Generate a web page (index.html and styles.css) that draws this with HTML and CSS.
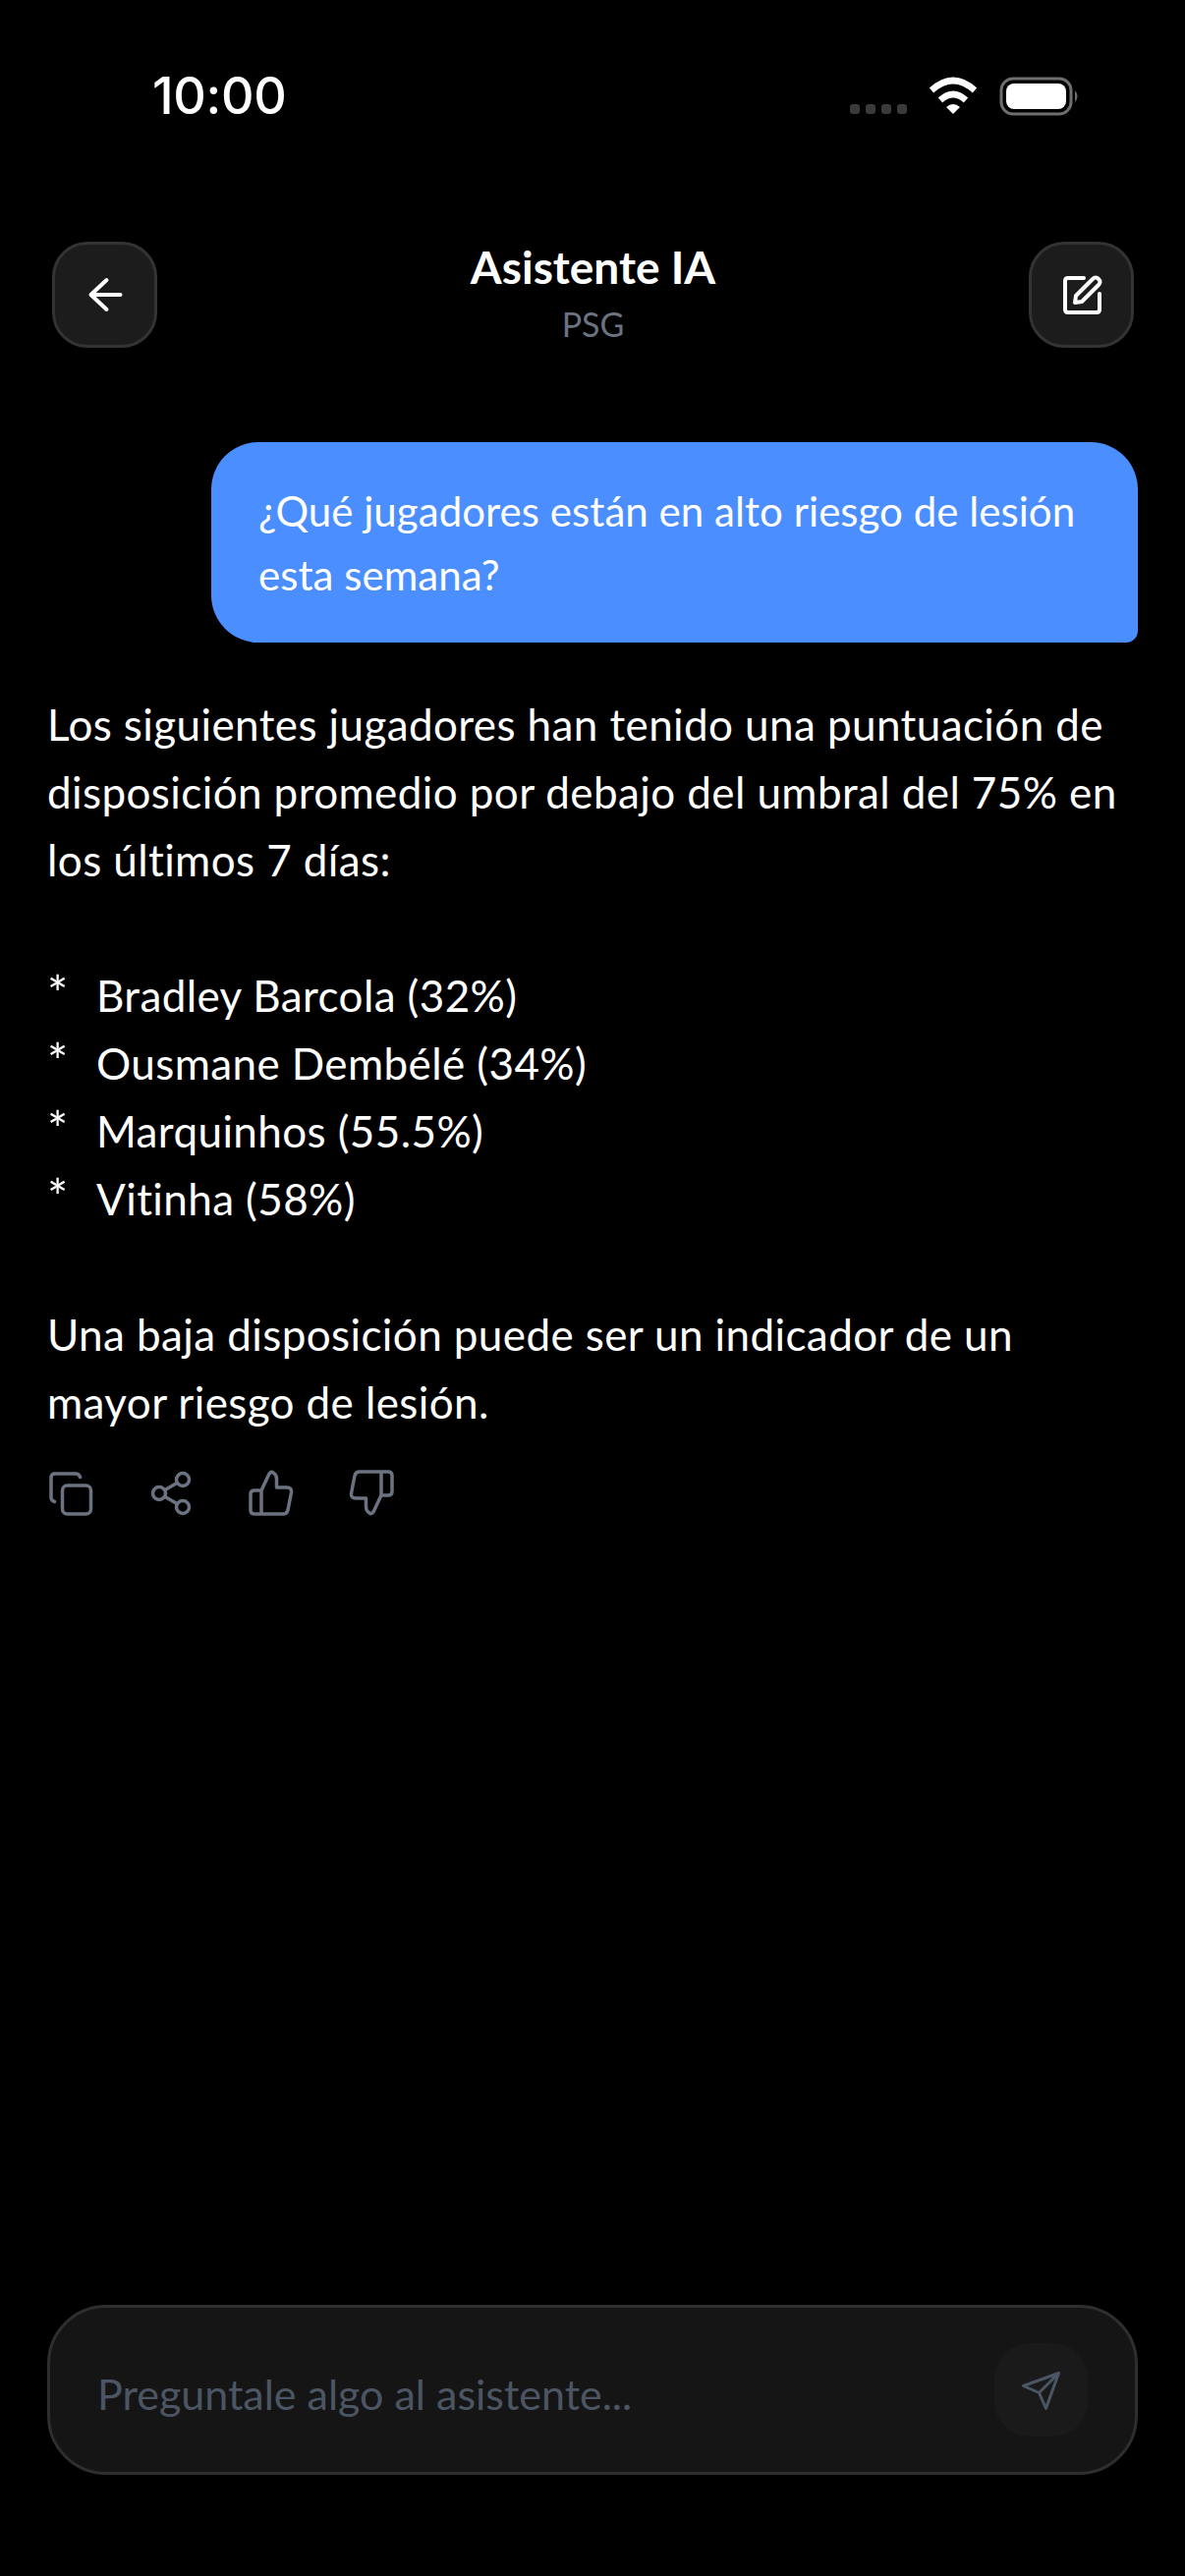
FILE: index.html
```html
<!DOCTYPE html>
<html lang="es">
<head>
  <meta charset="UTF-8" />
  <meta name="viewport" content="width=device-width, initial-scale=1.0" />
  <title>Asistente IA</title>
  <link rel="stylesheet" href="styles.css">
</head>
<body>
  <div class="status-bar">
    <span class="status-time">10:00</span>
    <svg class="status-icons" width="235" height="40" viewBox="0 0 235 40">
      <!-- signal dots -->
      <g fill="#3a3a3a">
        <rect x="0" y="28" width="10" height="10" rx="3"/>
        <rect x="16" y="28" width="10" height="10" rx="3"/>
        <rect x="32" y="28" width="10" height="10" rx="3"/>
        <rect x="48" y="28" width="10" height="10" rx="3"/>
      </g>
      <!-- wifi -->
      <g fill="none" stroke="#fff" stroke-width="6.5">
        <path d="M83 14 Q105 -6 127 14"/>
        <path d="M92 24 Q105 12 118 24"/>
      </g>
      <path d="M98 31 Q105 25 112 31 L105 38 Z" fill="#fff"/>
      <!-- battery -->
      <rect x="154" y="2" width="71" height="36" rx="12" fill="none" stroke="#6e6e6e" stroke-width="3"/>
      <rect x="159" y="7" width="61" height="26" rx="8" fill="#fff"/>
      <path d="M229 14 Q234 20 229 26 Z" fill="#6e6e6e"/>
    </svg>
  </div>

  <header class="chat-header">
    <button class="icon-btn" aria-label="Volver">
      <svg width="48" height="48" viewBox="0 0 48 48" fill="none" stroke="#fff" stroke-width="4" stroke-linecap="round" stroke-linejoin="round">
        <path d="M39.5 24H9.5M25.5 9L9.5 24L25.5 39"/>
      </svg>
    </button>
    <div class="chat-title">
      <h1>Asistente IA</h1>
      <p>PSG</p>
    </div>
    <button class="icon-btn" aria-label="Nuevo chat">
      <svg width="48" height="48" viewBox="0 0 48 48" fill="none" stroke="#fff" stroke-width="4" stroke-linecap="round" stroke-linejoin="round">
        <path d="M26 7H10Q7 7 7 10V39Q7 42 10 42H39Q42 42 42 39V23"/>
        <path d="M17 32L18 25L35 8Q38 5 41 8Q44 11 41 14L24 31Z"/>
      </svg>
    </button>
  </header>

  <main class="chat">
    <div class="bubble-user">¿Qué jugadores están en alto riesgo de lesión<br>esta semana?</div>

    <div class="answer">
      <p>Los siguientes jugadores han tenido una puntuación de<br>disposición promedio por debajo del umbral del 75% en<br>los últimos 7 días:</p>
      <ul>
        <li><span class="mark">*</span>Bradley Barcola (32%)</li>
        <li><span class="mark">*</span>Ousmane Dembélé (34%)</li>
        <li><span class="mark">*</span>Marquinhos (55.5%)</li>
        <li><span class="mark">*</span>Vitinha (58%)</li>
      </ul>
      <p>Una baja disposición puede ser un indicador de un<br>mayor riesgo de lesión.</p>
    </div>

    <div class="answer-actions">
      <svg width="48" height="48" viewBox="0 0 48 48">
        <rect x="15.5" y="16" width="29" height="29" rx="5"/>
        <path d="M33.5 7.5Q32.5 4 29 4H8Q4 4 4 8V28Q4 31.5 7.5 32.5"/>
      </svg>
      <svg width="48" height="48" viewBox="0 0 48 48">
        <circle cx="36" cy="10" r="6.5"/>
        <circle cx="12" cy="24" r="6.5"/>
        <circle cx="36" cy="38" r="6.5"/>
        <path d="M18 20.5L30 13.5M18 27.5L30 34.5"/>
      </svg>
      <svg width="48" height="48" viewBox="1 0 48 48">
        <path d="M15 21L23 4Q25 1.5 27 3Q30.5 5 30.5 9V18H41Q46 18 45.5 23L42 41Q41 45 37 45H8Q4 45 4 41V25Q4 21 8 21H15V45"/>
      </svg>
      <svg width="48" height="48" viewBox="0 0 48 48">
        <path transform="rotate(180 24.5 23.5)" d="M15 21L23 4Q25 1.5 27 3Q30.5 5 30.5 9V18H41Q46 18 45.5 23L42 41Q41 45 37 45H8Q4 45 4 41V25Q4 21 8 21H15V45"/>
      </svg>
    </div>
  </main>

  <div class="composer">
    <span class="composer-placeholder">Preguntale algo al asistente...</span>
    <button class="send-btn" aria-label="Enviar">
      <svg width="48" height="48" viewBox="0 0 48 48" fill="none" stroke="#4b5563" stroke-width="3" stroke-linejoin="round" stroke-linecap="round">
        <path d="M41.5 6.5L5.5 19.5L21.5 26.5L28.5 42.5ZM41.5 6.5L21.5 26.5"/>
      </svg>
    </button>
  </div>
</body>
</html>
```

FILE: styles.css
```css
* {
  box-sizing: border-box;
}
html, body {
  margin: 0;
  padding: 0;
}
body {
  width: 1206px;
  height: 2622px;
  overflow: hidden;
  display: flex;
  flex-direction: column;
  background-color: #000;
  color: #fff;
  font-family: 'Lato', sans-serif;
}

/* status bar */
.status-bar {
  height: 246px;
  padding: 60px 106px 0 155px;
  display: flex;
  justify-content: space-between;
  align-items: flex-start;
  flex-shrink: 0;
}
.status-time {
  font-family: 'Inter', sans-serif;
  font-size: 52px;
  line-height: 76px;
  font-weight: 500;
  letter-spacing: -0.3px;
}
.status-icons {
  margin-top: 18px;
}

/* header */
.chat-header {
  height: 108px;
  padding: 0 52px 0 53px;
  display: flex;
  justify-content: space-between;
  align-items: flex-start;
  flex-shrink: 0;
}
.icon-btn {
  width: 107px;
  height: 108px;
  padding: 0;
  display: flex;
  align-items: center;
  justify-content: center;
  background-color: #1c1c1c;
  border: 3px solid #333;
  border-radius: 36px;
}
.chat-title {
  text-align: center;
}
.chat-title h1 {
  margin: -3px 0 0;
  font-size: 46px;
  line-height: 58px;
  font-weight: 700;
}
.chat-title p {
  margin: 9px 0 0;
  font-size: 34px;
  line-height: 40px;
  color: #6b7280;
}

/* messages */
.chat {
  flex: 1;
  padding: 96px 48px 0;
  font-size: 44px;
  line-height: 69px;
  letter-spacing: 0.4px;
}
.bubble-user {
  margin-left: 167px;
  padding: 38px 30px 36px 48px;
  background-color: #4b8eff;
  border-radius: 48px 48px 12px 48px;
  font-size: 42px;
  line-height: 65px;
  letter-spacing: 0.05px;
}
.answer {
  margin-top: 49px;
}
.answer p {
  margin: 0;
}
.answer ul {
  list-style: none;
  margin: 69px 0;
  padding: 0;
}
.mark {
  display: inline-block;
  width: 50px;
  font-size: 50px;
  line-height: 60px;
}
.answer-actions {
  margin-top: 34px;
  display: flex;
  gap: 54px;
}
.answer-actions svg {
  fill: none;
  stroke: #6b7280;
  stroke-width: 3.5;
  stroke-linecap: round;
  stroke-linejoin: round;
}

/* input */
.composer {
  height: 173px;
  margin: 0 48px 103px;
  padding: 0 48px;
  display: flex;
  align-items: center;
  justify-content: space-between;
  flex-shrink: 0;
  background-color: #151515;
  border: 3px solid #2e2e2e;
  border-radius: 60px;
}
.composer-placeholder {
  font-size: 43px;
  color: #4b5563;
  margin-top: 8px;
}
.send-btn {
  width: 95px;
  height: 95px;
  padding: 0;
  display: flex;
  align-items: center;
  justify-content: center;
  background-color: #1a1a1a;
  border: none;
  border-radius: 36px;
}
```
